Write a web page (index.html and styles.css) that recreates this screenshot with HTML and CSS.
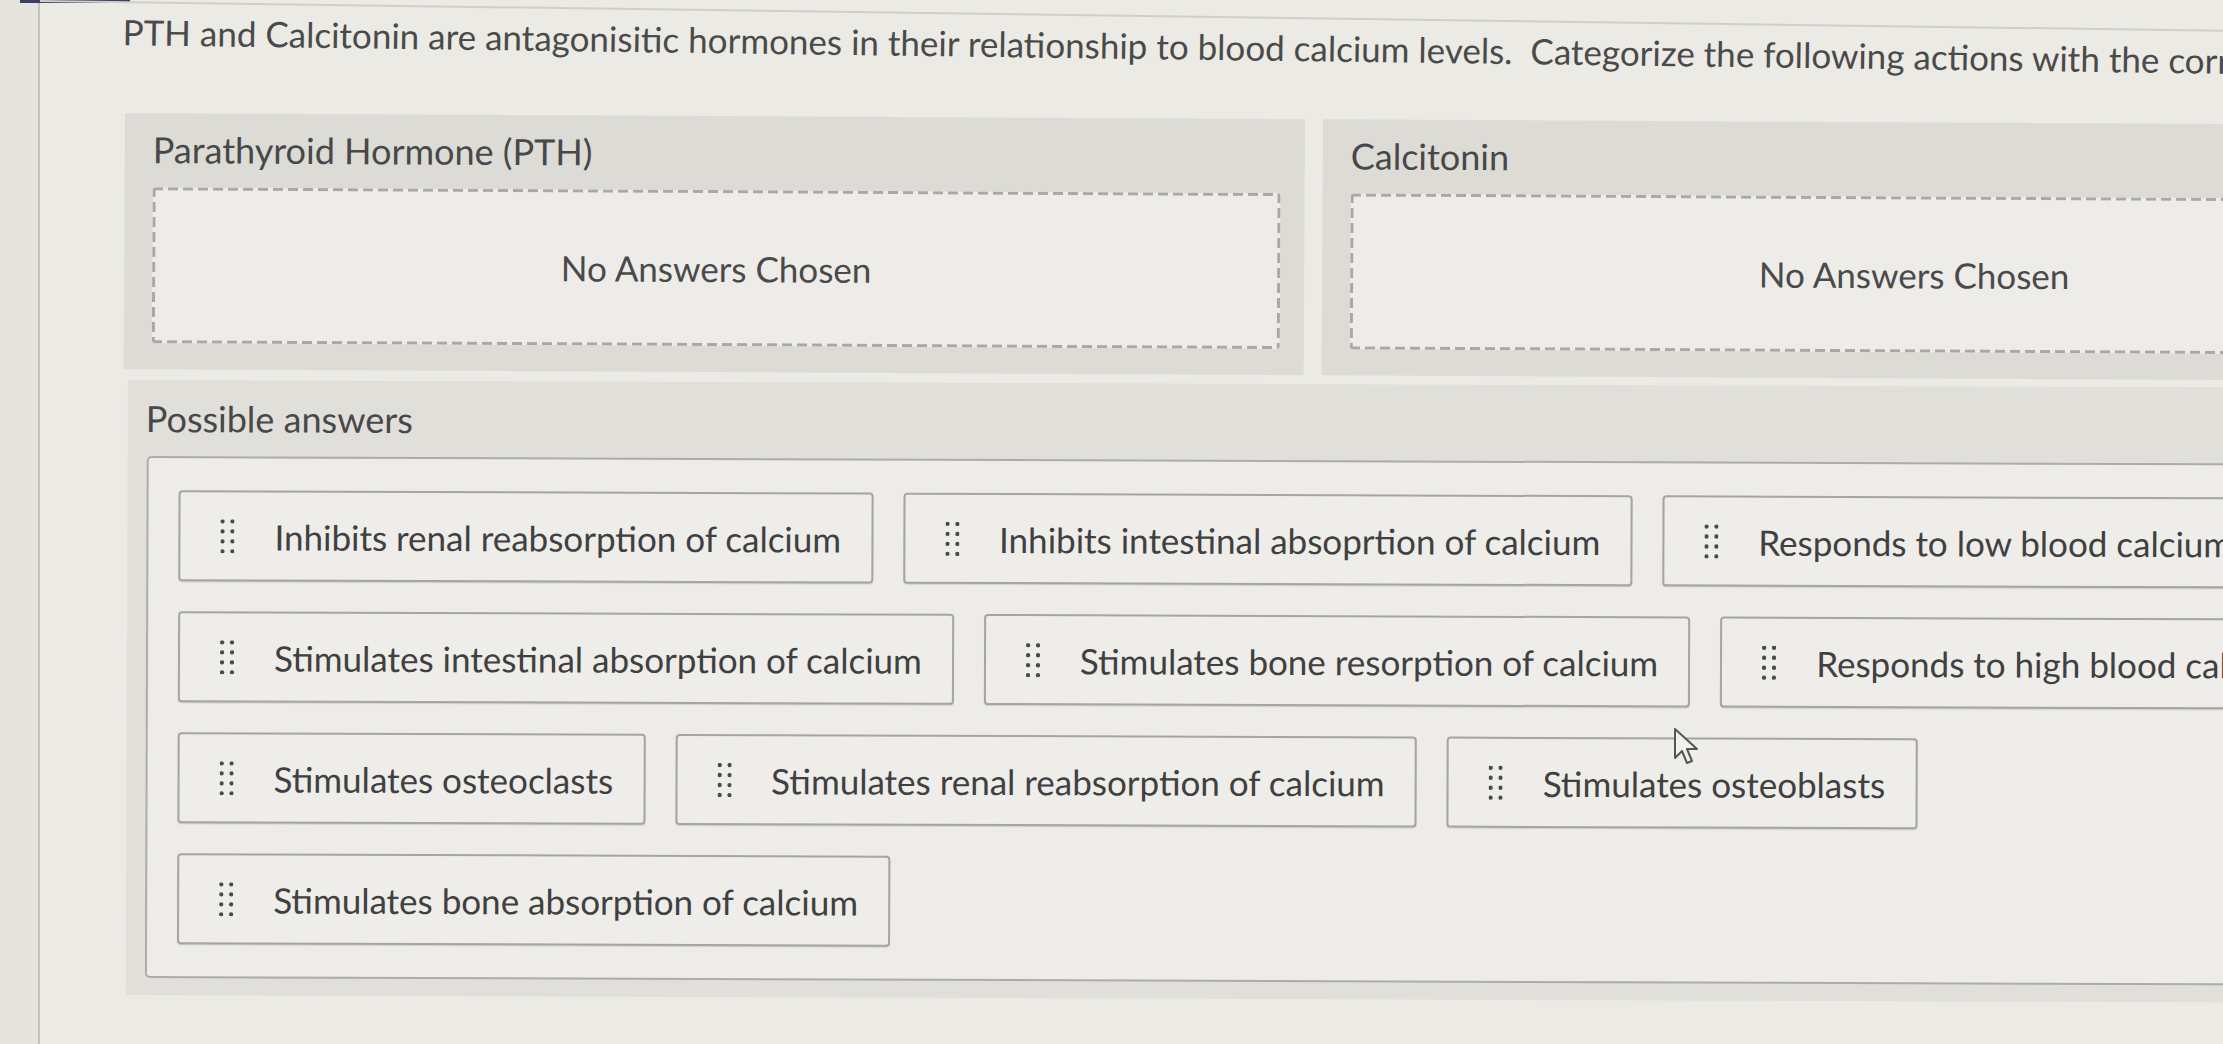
FILE: index.html
```html
<!DOCTYPE html>
<html lang="en">
<head>
<meta charset="utf-8">
<title>PTH and Calcitonin</title>
<link rel="stylesheet" href="styles.css">
</head>
<body>
<div class="topmark"></div>
<div class="page">
  <div class="gutter"></div>
  <main class="content">
    <header class="prompt">
      <p class="question">PTH and Calcitonin are antagonisitic hormones in their relationship to blood calcium levels.&nbsp; Categorize the following actions with the correct hormone.</p>
    </header>

    <section class="categories">
      <div class="category">
        <h2 class="cat-title">Parathyroid Hormone (PTH)</h2>
        <div class="dropzone"><span>No Answers Chosen</span></div>
      </div>
      <div class="category">
        <h2 class="cat-title">Calcitonin</h2>
        <div class="dropzone"><span>No Answers Chosen</span></div>
      </div>
    </section>

    <section class="answers">
      <h2 class="cat-title answers-title">Possible answers</h2>
      <div class="answer-box">
        <div class="chip"><svg class="handle" viewBox="0 0 14 34" width="14" height="34"><g fill="#4a4a4a"><circle cx="2" cy="2" r="2.2"/><circle cx="12" cy="2" r="2.2"/><circle cx="2" cy="12" r="2.2"/><circle cx="12" cy="12" r="2.2"/><circle cx="2" cy="22" r="2.2"/><circle cx="12" cy="22" r="2.2"/><circle cx="2" cy="32" r="2.2"/><circle cx="12" cy="32" r="2.2"/></g></svg><span>Inhibits renal reabsorption of calcium</span></div>
        <div class="chip"><svg class="handle" viewBox="0 0 14 34" width="14" height="34"><g fill="#4a4a4a"><circle cx="2" cy="2" r="2.2"/><circle cx="12" cy="2" r="2.2"/><circle cx="2" cy="12" r="2.2"/><circle cx="12" cy="12" r="2.2"/><circle cx="2" cy="22" r="2.2"/><circle cx="12" cy="22" r="2.2"/><circle cx="2" cy="32" r="2.2"/><circle cx="12" cy="32" r="2.2"/></g></svg><span>Inhibits intestinal absoprtion of calcium</span></div>
        <div class="chip"><svg class="handle" viewBox="0 0 14 34" width="14" height="34"><g fill="#4a4a4a"><circle cx="2" cy="2" r="2.2"/><circle cx="12" cy="2" r="2.2"/><circle cx="2" cy="12" r="2.2"/><circle cx="12" cy="12" r="2.2"/><circle cx="2" cy="22" r="2.2"/><circle cx="12" cy="22" r="2.2"/><circle cx="2" cy="32" r="2.2"/><circle cx="12" cy="32" r="2.2"/></g></svg><span>Responds to low blood calcium levels</span></div>
        <div class="chip"><svg class="handle" viewBox="0 0 14 34" width="14" height="34"><g fill="#4a4a4a"><circle cx="2" cy="2" r="2.2"/><circle cx="12" cy="2" r="2.2"/><circle cx="2" cy="12" r="2.2"/><circle cx="12" cy="12" r="2.2"/><circle cx="2" cy="22" r="2.2"/><circle cx="12" cy="22" r="2.2"/><circle cx="2" cy="32" r="2.2"/><circle cx="12" cy="32" r="2.2"/></g></svg><span>Stimulates intestinal absorption of calcium</span></div>
        <div class="chip"><svg class="handle" viewBox="0 0 14 34" width="14" height="34"><g fill="#4a4a4a"><circle cx="2" cy="2" r="2.2"/><circle cx="12" cy="2" r="2.2"/><circle cx="2" cy="12" r="2.2"/><circle cx="12" cy="12" r="2.2"/><circle cx="2" cy="22" r="2.2"/><circle cx="12" cy="22" r="2.2"/><circle cx="2" cy="32" r="2.2"/><circle cx="12" cy="32" r="2.2"/></g></svg><span>Stimulates bone resorption of calcium</span></div>
        <div class="chip"><svg class="handle" viewBox="0 0 14 34" width="14" height="34"><g fill="#4a4a4a"><circle cx="2" cy="2" r="2.2"/><circle cx="12" cy="2" r="2.2"/><circle cx="2" cy="12" r="2.2"/><circle cx="12" cy="12" r="2.2"/><circle cx="2" cy="22" r="2.2"/><circle cx="12" cy="22" r="2.2"/><circle cx="2" cy="32" r="2.2"/><circle cx="12" cy="32" r="2.2"/></g></svg><span>Responds to high blood calcium levels</span></div>
        <div class="chip"><svg class="handle" viewBox="0 0 14 34" width="14" height="34"><g fill="#4a4a4a"><circle cx="2" cy="2" r="2.2"/><circle cx="12" cy="2" r="2.2"/><circle cx="2" cy="12" r="2.2"/><circle cx="12" cy="12" r="2.2"/><circle cx="2" cy="22" r="2.2"/><circle cx="12" cy="22" r="2.2"/><circle cx="2" cy="32" r="2.2"/><circle cx="12" cy="32" r="2.2"/></g></svg><span>Stimulates osteoclasts</span></div>
        <div class="chip"><svg class="handle" viewBox="0 0 14 34" width="14" height="34"><g fill="#4a4a4a"><circle cx="2" cy="2" r="2.2"/><circle cx="12" cy="2" r="2.2"/><circle cx="2" cy="12" r="2.2"/><circle cx="12" cy="12" r="2.2"/><circle cx="2" cy="22" r="2.2"/><circle cx="12" cy="22" r="2.2"/><circle cx="2" cy="32" r="2.2"/><circle cx="12" cy="32" r="2.2"/></g></svg><span>Stimulates renal reabsorption of calcium</span></div>
        <div class="chip"><svg class="handle" viewBox="0 0 14 34" width="14" height="34"><g fill="#4a4a4a"><circle cx="2" cy="2" r="2.2"/><circle cx="12" cy="2" r="2.2"/><circle cx="2" cy="12" r="2.2"/><circle cx="12" cy="12" r="2.2"/><circle cx="2" cy="22" r="2.2"/><circle cx="12" cy="22" r="2.2"/><circle cx="2" cy="32" r="2.2"/><circle cx="12" cy="32" r="2.2"/></g></svg><span>Stimulates osteoblasts</span></div>
        <div class="chip"><svg class="handle" viewBox="0 0 14 34" width="14" height="34"><g fill="#4a4a4a"><circle cx="2" cy="2" r="2.2"/><circle cx="12" cy="2" r="2.2"/><circle cx="2" cy="12" r="2.2"/><circle cx="12" cy="12" r="2.2"/><circle cx="2" cy="22" r="2.2"/><circle cx="12" cy="22" r="2.2"/><circle cx="2" cy="32" r="2.2"/><circle cx="12" cy="32" r="2.2"/></g></svg><span>Stimulates bone absorption of calcium</span></div>
      </div>
    </section>
  </main>
</div>
<svg class="cursor" width="28" height="40" viewBox="0 0 28 40"><path d="M2 2 L2 31 L9 24 L14 36 L19 34 L14 22 L24 22 Z" fill="#f2f1ed" stroke="#555" stroke-width="2" stroke-linejoin="round"/></svg>
</body>
</html>
```

FILE: styles.css
```css
html, body {
  margin: 0;
  padding: 0;
}
body {
  width: 2223px;
  height: 1044px;
  overflow: hidden;
  background: #ebeae5;
  font-family: Lato, "Open Sans", "Liberation Sans", sans-serif;
  color: #454545;
  position: relative;
}
.topmark {
  position: absolute;
  left: 20px;
  top: 0;
  width: 110px;
  height: 3px;
  background: #3c4060;
}
.page {
  display: flex;
  min-height: 1044px;
}
.gutter {
  width: 38px;
  flex: none;
  background: #e5e4df;
  border-right: 2px solid #c3c2bd;
}
.content {
  flex: none;
  width: 2600px;
  padding: 0 0 0 83px;
  box-sizing: border-box;
}
.prompt {
  margin-left: -83px;
  padding-left: 83px;
  border-top: 2px solid #cfcec9;
  transform: rotate(0.78deg);
  transform-origin: 0 0;
}
.question {
  margin: 8px 0 0 0;
  font-size: 35px;
  line-height: 40px;
  white-space: nowrap;
  color: #4a4a4a;
}
.categories {
  display: flex;
  gap: 18px;
  margin-top: 63px;
  margin-left: 2px;
  transform: rotate(0.3deg);
  transform-origin: 0 0;
}
.category {
  width: 1180px;
  flex: none;
  background: #dcdbd6;
  padding: 16px 24px 26px 28px;
  box-sizing: border-box;
}
.cat-title {
  margin: 0;
  font-size: 36px;
  line-height: 40px;
  font-weight: 400;
  color: #484848;
}
.dropzone {
  margin-top: 18px;
  height: 156px;
  box-sizing: border-box;
  border-radius: 4px;
  background-color: #edece8;
  background-image:
    repeating-linear-gradient(90deg, #a9a8a4 0 10px, transparent 10px 15px),
    repeating-linear-gradient(90deg, #a9a8a4 0 10px, transparent 10px 15px),
    repeating-linear-gradient(180deg, #a9a8a4 0 10px, transparent 10px 15px),
    repeating-linear-gradient(180deg, #a9a8a4 0 10px, transparent 10px 15px);
  background-size: 100% 3px, 100% 3px, 3px 100%, 3px 100%;
  background-position: left top, left bottom, left top, right top;
  background-repeat: no-repeat;
  display: flex;
  align-items: center;
  justify-content: center;
  font-size: 35px;
  color: #4a4a4a;
}
.answers {
  margin-top: 11px;
  margin-left: 5px;
  width: 2480px;
  background: #e0dfda;
  padding: 18px 0 17px 19px;
  box-sizing: border-box;
  transform: rotate(0.2deg);
  transform-origin: 0 0;
}
.answers-title {
  margin-left: -1px;
}
.answer-box {
  margin-top: 18px;
  width: 2420px;
  box-sizing: border-box;
  border: 2px solid #adaca8;
  border-radius: 5px;
  background: #edece8;
  padding: 32px 30px;
  display: flex;
  flex-wrap: wrap;
  gap: 30px;
}
.chip {
  height: 91px;
  box-sizing: border-box;
  border: 2px solid #a6a5a1;
  border-radius: 4px;
  background: #eeede9;
  box-shadow: 0 1px 1px rgba(0, 0, 0, 0.12);
  display: flex;
  align-items: center;
  padding: 0 30px 0 40px;
  font-size: 35px;
  color: #404040;
  white-space: nowrap;
}
.handle {
  flex: none;
  margin-right: 40px;
}
.cursor {
  position: absolute;
  left: 1673px;
  top: 727px;
}
```
